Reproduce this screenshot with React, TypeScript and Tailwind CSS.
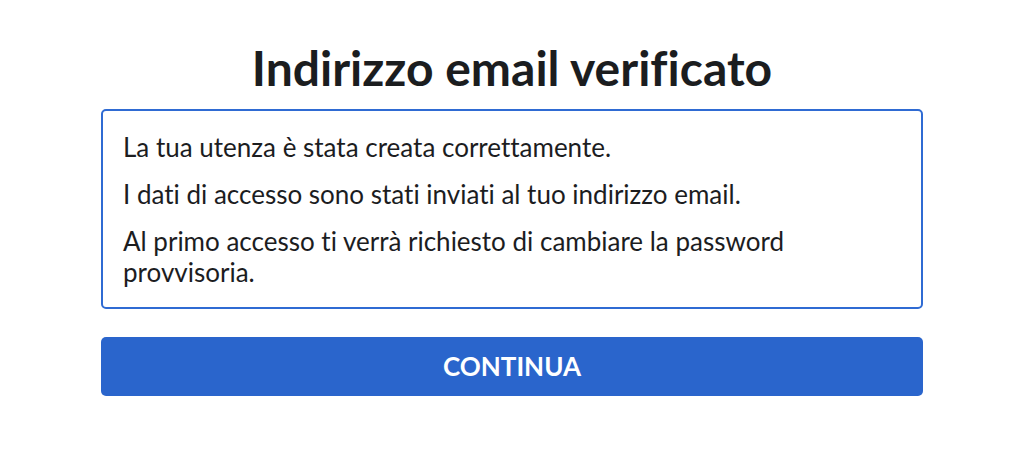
export default function App() {
  return (
    <div className="w-[1024px] h-[462px] bg-white flex flex-col items-center [font-variant-ligatures:none]" style={{ fontFamily: "Lato, 'Open Sans', sans-serif" }}>
      <h1 className="mt-[40px] text-[48px] leading-[56px] font-bold text-[#1b1d1f]">Indirizzo email verificato</h1>
      <div className="mt-[13px] w-[822px] h-[200px] border-2 border-[#2f6bd3] rounded-[5px] px-[20px] pt-[21px] text-[26px] leading-[31px] text-[#1c1d1f]">
        <p>La tua utenza è stata creata correttamente.</p>
        <p className="mt-[16px]">I dati di accesso sono stati inviati al tuo indirizzo email.</p>
        <p className="mt-[16px] pr-[100px]">Al primo accesso ti verrà richiesto di cambiare la password provvisoria.</p>
      </div>
      <button className="mt-[28px] w-[822px] h-[59px] bg-[#2a65cc] rounded-[5px] text-white text-[26px] font-bold">CONTINUA</button>
    </div>
  );
}
